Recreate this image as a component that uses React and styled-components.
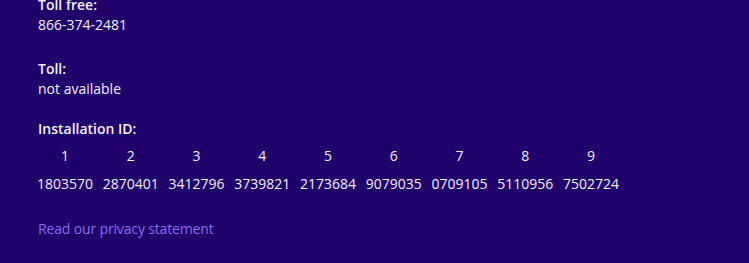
import styled, { createGlobalStyle } from "styled-components";

const GlobalStyle = createGlobalStyle`
  html, body {
    margin: 0;
    background: #20006a;
  }
  body {
    font-family: "Open Sans", "Noto Sans", sans-serif;
    font-size: 14px;
    color: #f2f0f8;
    overflow: hidden;
  }
`;

const Page = styled.div`
  width: 749px;
  height: 263px;
  padding-left: 38px;
  box-sizing: border-box;
  background: #20006a;
`;

const Section = styled.div`
  margin-top: ${(p) => p.$top}px;
  line-height: 20px;
`;

const Label = styled.div`
  font-weight: 600;
`;

const Value = styled.div`
  font-weight: 400;
`;

const IdGrid = styled.div`
  display: grid;
  grid-template-columns: repeat(9, 54px);
  column-gap: 11.75px;
  row-gap: 8px;
  margin-top: 7px;
  justify-items: center;
  line-height: 20px;
`;

const Cell = styled.span`
  white-space: nowrap;
`;

const PrivacyLink = styled.a`
  display: inline-block;
  margin-top: 25px;
  line-height: 20px;
  color: #8a6cf0;
  text-decoration: none;
  cursor: pointer;
  letter-spacing: -0.15px;
`;

const groups = [
  "1803570",
  "2870401",
  "3412796",
  "3739821",
  "2173684",
  "9079035",
  "0709105",
  "5110956",
  "7502724",
];

export default function App() {
  return (
    <>
      <GlobalStyle />
      <Page>
        <Section $top={-5}>
          <Label>Toll free:</Label>
          <Value>866-374-2481</Value>
        </Section>
        <Section $top={24}>
          <Label>Toll:</Label>
          <Value>not available</Value>
        </Section>
        <Section $top={20}>
          <Label>Installation ID:</Label>
          <IdGrid>
            {groups.map((_, i) => (
              <Cell key={"n" + i}>{i + 1}</Cell>
            ))}
            {groups.map((g, i) => (
              <Cell key={"g" + i}>{g}</Cell>
            ))}
          </IdGrid>
        </Section>
        <PrivacyLink>Read our privacy statement</PrivacyLink>
      </Page>
    </>
  );
}
